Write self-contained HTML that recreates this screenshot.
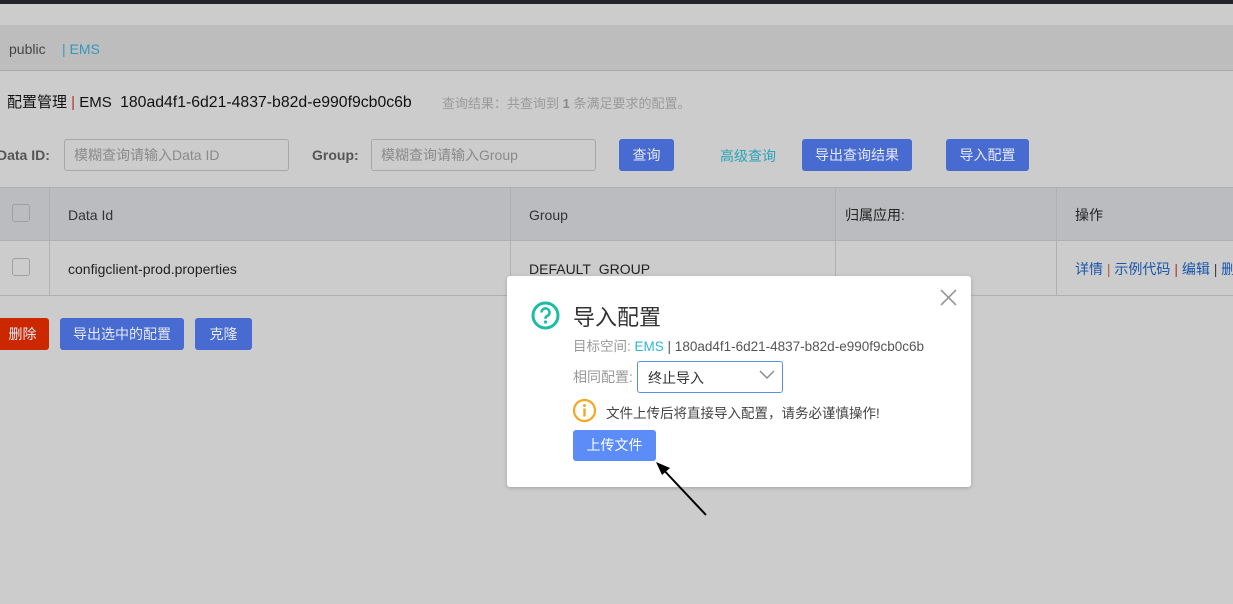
<!DOCTYPE html>
<html><head><meta charset="utf-8"><style>
*{margin:0;padding:0;box-sizing:border-box}
body{width:1233px;height:604px;overflow:hidden;background:#cccccc;font-family:"Liberation Sans","Noto Sans CJK SC",sans-serif;font-size:14px;color:#333;position:relative}
.a{position:absolute}
.btn{position:absolute;background:#476bd0;color:#e6e9f5;border-radius:3px;font-size:14px;text-align:center;line-height:32px;height:32px}
.inp{position:absolute;height:32px;border:1px solid #a8a8a8;border-radius:3px;background:#cccccc;color:#8a8a8a;font-size:14px;line-height:30px;padding-left:9px}
</style></head><body>
<div class="a" style="left:0;top:0;width:1233px;height:4px;background:#22252a"></div>
<div class="a" style="left:0;top:25px;width:1233px;height:46px;background:#bdbdbd;border-bottom:1px solid #a9a9a9"></div>
<div class="a" style="left:9px;top:41px;color:#444">public</div>
<div class="a" style="left:62px;top:41px;color:#3399bb">| EMS</div>
<div class="a" style="left:7px;top:91px;font-size:15px;color:#111">配置管理 <span style="color:#a33">|</span> EMS &nbsp;<span style="font-size:15.8px">180ad4f1-6d21-4837-b82d-e990f9cb0c6b</span></div>
<div class="a" style="left:442px;top:93px;font-size:13px;color:#9a9a9a">查询结果：共查询到 <b style="color:#8a8a8a">1</b> 条满足要求的配置。</div>
<div class="a" style="left:-3px;top:147px;font-weight:bold;color:#555">Data ID:</div>
<div class="inp" style="left:64px;top:139px;width:225px">模糊查询请输入Data ID</div>
<div class="a" style="left:312px;top:147px;font-weight:bold;color:#555">Group:</div>
<div class="inp" style="left:371px;top:139px;width:225px">模糊查询请输入Group</div>
<div class="btn" style="left:619px;top:139px;width:55px">查询</div>
<div class="a" style="left:720px;top:146px;color:#2aa3b8">高级查询</div>
<div class="btn" style="left:802px;top:139px;width:110px">导出查询结果</div>
<div class="btn" style="left:946px;top:139px;width:83px">导入配置</div>
<div class="a" style="left:0;top:187px;width:1233px;height:54px;background:#bbbcbf;border-top:1px solid #b0b0b0;border-bottom:1px solid #b0b0b0"></div>
<div class="a" style="left:0;top:295px;width:1233px;height:1px;background:#b0b0b0"></div>
<div class="a" style="left:49px;top:187px;width:1px;height:109px;background:#b0b0b0"></div>
<div class="a" style="left:510px;top:187px;width:1px;height:109px;background:#b0b0b0"></div>
<div class="a" style="left:835px;top:187px;width:1px;height:109px;background:#b0b0b0"></div>
<div class="a" style="left:1056px;top:187px;width:1px;height:109px;background:#b0b0b0"></div>
<div class="a" style="left:12px;top:204px;width:18px;height:18px;border:1px solid #a0a0a0;border-radius:3px"></div>
<div class="a" style="left:12px;top:258px;width:18px;height:18px;border:1px solid #a0a0a0;border-radius:3px"></div>
<div class="a" style="left:68px;top:207px;color:#333">Data Id</div>
<div class="a" style="left:529px;top:207px;color:#333">Group</div>
<div class="a" style="left:845px;top:205px;color:#222">归属应用:</div>
<div class="a" style="left:1075px;top:205px;color:#222">操作</div>
<div class="a" style="left:68px;top:261px;color:#222">configclient-prod.properties</div>
<div class="a" style="left:529px;top:261px;color:#222">DEFAULT_GROUP</div>
<div class="a" style="left:1075px;top:259px;color:#1a55aa;white-space:nowrap">详情 <span style="color:#a63">|</span> 示例代码 <span style="color:#a33">|</span> 编辑 <span style="color:#444">|</span> 删</div>
<div class="btn" style="left:-4px;top:318px;width:53px;background:#cc2800">删除</div>
<div class="btn" style="left:60px;top:318px;width:124px">导出选中的配置</div>
<div class="btn" style="left:195px;top:318px;width:57px">克隆</div>

<div class="a" style="left:507px;top:276px;width:464px;height:211px;background:#fff;border-radius:3px;box-shadow:0 1px 4px rgba(0,0,0,.2)"></div>
<svg class="a" style="left:940px;top:289px" width="17" height="17"><path d="M1 1L16 16M16 1L1 16" stroke="#999" stroke-width="1.6"/></svg>
<svg class="a" style="left:531px;top:301px" width="29" height="29"><circle cx="14.5" cy="14.5" r="12.5" fill="none" stroke="#1dbca6" stroke-width="3"/><path d="M10.5 11.5a4 4 0 1 1 5.5 3.6c-1.2.6-1.5 1.2-1.5 2.6" fill="none" stroke="#1dbca6" stroke-width="2.6"/><circle cx="14.5" cy="21" r="1.6" fill="#1dbca6"/></svg>
<div class="a" style="left:573px;top:300px;font-size:22px;color:#333">导入配置</div>
<div class="a" style="left:573px;top:335px;font-size:13.5px;color:#999;white-space:nowrap">目标空间: <span style="color:#2cb5d8">EMS</span> <span style="color:#555">| 180ad4f1-6d21-4837-b82d-e990f9cb0c6b</span></div>
<div class="a" style="left:573px;top:367px;color:#999">相同配置:</div>
<div class="a" style="left:637px;top:361px;width:146px;height:32px;border:1px solid #5b8def;border-radius:3px;padding-left:10px;line-height:32px;color:#333">终止导入</div>
<svg class="a" style="left:759px;top:370px" width="16" height="10"><path d="M1 1L8 8L15 1" fill="none" stroke="#888" stroke-width="1.4"/></svg>
<svg class="a" style="left:572px;top:398px" width="25" height="25"><circle cx="12.5" cy="12.5" r="10.5" fill="none" stroke="#f5a623" stroke-width="2.2"/><circle cx="12.5" cy="7.5" r="1.5" fill="#f5a623"/><rect x="11.3" y="10.5" width="2.4" height="8" fill="#f5a623"/></svg>
<div class="a" style="left:606px;top:402px;font-size:13.5px;color:#444">文件上传后将直接导入配置，请务必谨慎操作!</div>
<div class="a" style="left:573px;top:430px;width:83px;height:31px;background:#5b8cf8;border-radius:3px;color:#fff;text-align:center;line-height:31px;font-size:14px">上传文件</div>
<svg class="a" style="left:650px;top:460px" width="60" height="60"><path d="M56 55L9 5" stroke="#000" stroke-width="2"/><path d="M6 2L20 8L12 15Z" fill="#000"/></svg>
</body></html>
